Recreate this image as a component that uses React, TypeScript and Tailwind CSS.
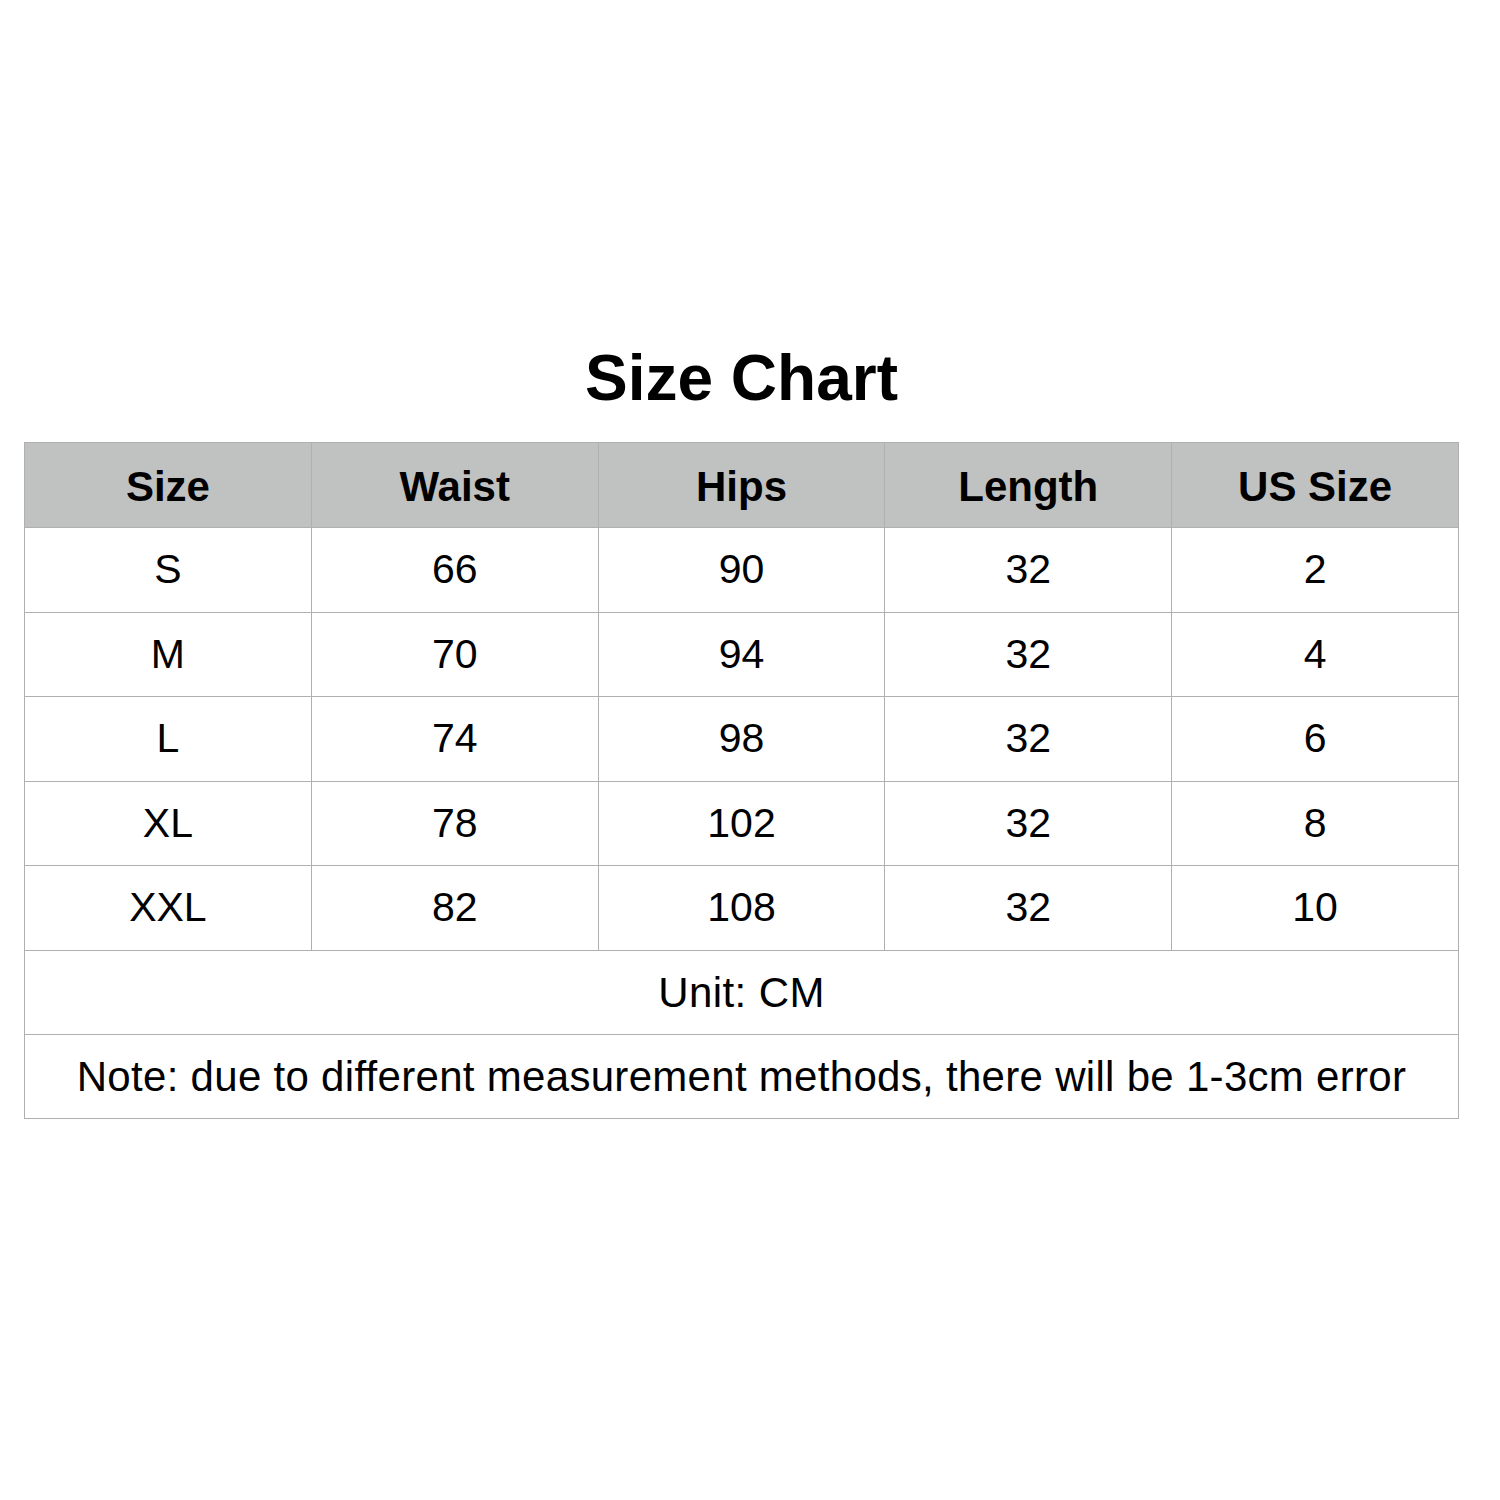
const header = ['Size', 'Waist', 'Hips', 'Length', 'US Size']

const rows = [
  ['S', '66', '90', '32', '2'],
  ['M', '70', '94', '32', '4'],
  ['L', '74', '98', '32', '6'],
  ['XL', '78', '102', '32', '8'],
  ['XXL', '82', '108', '32', '10'],
]

export default function App() {
  return (
    <div
      className="w-[1500px] h-[1500px] bg-white text-black pt-[346px] px-[24px]"
      style={{ fontFamily: '"Liberation Sans", Arial, sans-serif' }}
    >
      <div className="w-[1435px]">
        <h1 className="text-center text-[64px] leading-none font-bold mb-[32px]">Size Chart</h1>
        <table className="w-[1435px] border-collapse table-fixed">
          <thead>
            <tr className="h-[85px] bg-[#c0c2c1]">
              {header.map(h => (
                <th key={h} className="border border-[#b0b0b0] text-[42px] font-bold text-center p-0 pt-[3px]">
                  {h}
                </th>
              ))}
            </tr>
          </thead>
          <tbody>
            {rows.map(r => (
              <tr key={r[0]} className="h-[84.5px]">
                {r.map((c, i) => (
                  <td key={i} className="border border-[#b0b0b0] text-[41px] text-center p-0">
                    {c}
                  </td>
                ))}
              </tr>
            ))}
            <tr className="h-[84.5px]">
              <td colSpan={5} className="border border-[#b0b0b0] text-[42px] tracking-[0.4px] text-center p-0">
                Unit: CM
              </td>
            </tr>
            <tr className="h-[84px]">
              <td colSpan={5} className="border border-[#b0b0b0] text-[42px] tracking-[0.3px] text-center p-0">
                Note: due to different measurement methods, there will be 1-3cm error
              </td>
            </tr>
          </tbody>
        </table>
      </div>
    </div>
  )
}
